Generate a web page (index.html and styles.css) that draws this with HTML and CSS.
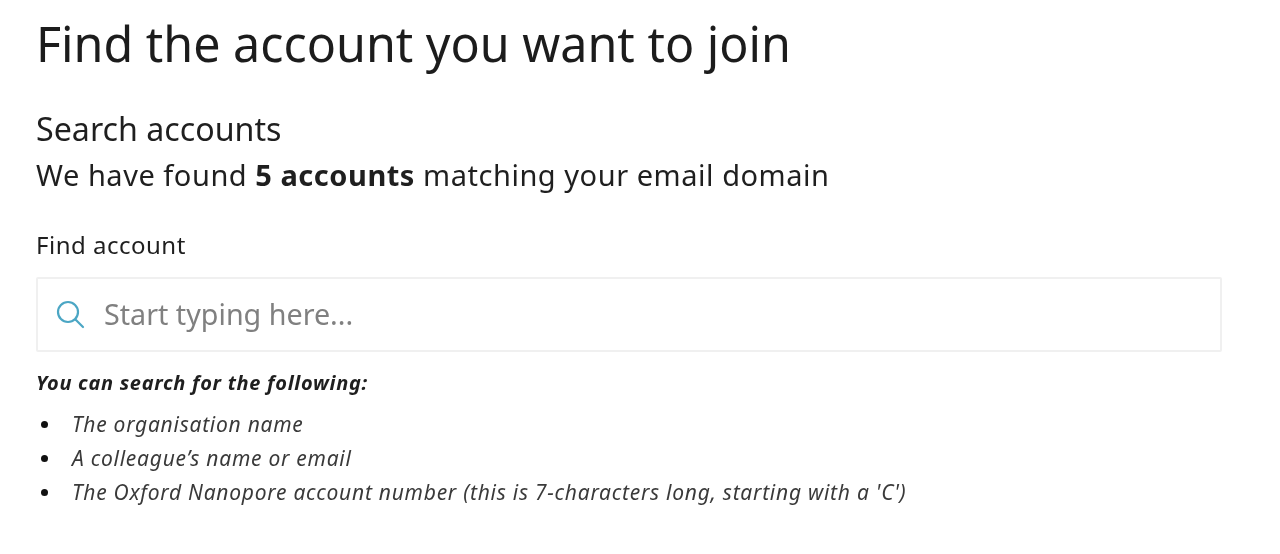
FILE: index.html
```html
<!DOCTYPE html>
<html lang="en">
<head>
    <meta charset="UTF-8">
    <title>Find the account you want to join</title>
    <link rel="stylesheet" href="styles.css">
</head>
<body>
    <div class="container">
        <h1>Find the account you want to join</h1>
        <h2>Search accounts</h2>
        <p class="intro">We have found <strong>5 accounts</strong> matching your email domain</p>
        <label class="field-label" for="account">Find account</label>
        <div class="search-box">
            <svg class="search-icon" viewBox="0 0 30 30" fill="none" stroke="#4ba6c4" stroke-width="2.2" stroke-linecap="round">
                <circle cx="13" cy="13" r="10"/>
                <path d="M20.5 20.5L28 28"/>
            </svg>
            <input type="text" id="account" placeholder="Start typing here...">
        </div>
        <p class="hint-title">You can search for the following:</p>
        <ul class="hint-list">
            <li>The organisation name</li>
            <li>A colleague’s name or email</li>
            <li>The Oxford Nanopore account number (this is 7-characters long, starting with a 'C')</li>
        </ul>
    </div>
</body>
</html>
```

FILE: styles.css
```css
* {
    margin: 0;
    padding: 0;
    box-sizing: border-box;
    font-family: 'Noto Sans', 'Open Sans', sans-serif;
}

body {
    background: #fff;
    color: #1f1f1f;
}

.container {
    width: 1186px;
    margin-left: 36px;
    padding-top: 12px;
    filter: blur(0.6px);
}

h1 {
    font-size: 48.4px;
    font-weight: 400;
    line-height: 62px;
    color: #1c1c1c;
}

h2 {
    font-size: 32.2px;
    font-weight: 400;
    line-height: 44px;
    margin-top: 33px;
}

.intro {
    font-size: 29px;
    line-height: 40px;
    letter-spacing: 0.53px;
    margin-top: 4px;
}

.field-label {
    display: block;
    font-size: 24px;
    line-height: 32px;
    letter-spacing: 0.5px;
    margin-top: 34px;
}

.search-box {
    display: flex;
    align-items: center;
    height: 75px;
    margin-top: 16px;
    padding: 0 0 2px 17px;
    border: 2px solid #f0f0f0;
    border-radius: 2px;
}

.search-icon {
    width: 30px;
    height: 30px;
}

input {
    flex: 1;
    border: none;
    outline: none;
    margin-left: 19px;
    font-size: 28.7px;
}

input::placeholder {
    color: #808080;
    opacity: 1;
}

.hint-title {
    font-size: 20px;
    line-height: 28px;
    font-style: italic;
    font-weight: 700;
    letter-spacing: 0.7px;
    margin-top: 17px;
}

.hint-list {
    list-style: none;
    margin-top: 10px;
}

.hint-list li {
    display: flex;
    align-items: center;
    font-size: 21px;
    line-height: 34px;
    font-style: italic;
    letter-spacing: 0.74px;
    color: #3a3a3a;
}

.hint-list li::before {
    content: "";
    flex: none;
    width: 7px;
    height: 7px;
    margin: 0 24px 0 5px;
    border-radius: 50%;
    background: #111;
}
```
